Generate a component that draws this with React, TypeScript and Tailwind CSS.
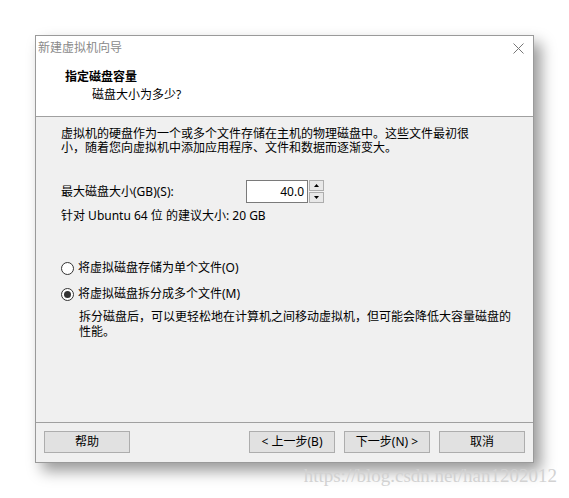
import React from "react";

const font = { fontFamily: '"Noto Sans", "Noto Sans CJK SC", sans-serif' };
const lineFont = { fontFamily: '"Liberation Sans", "Noto Sans CJK SC", sans-serif' };

function Btn({ children, className = "" }: { children: React.ReactNode; className?: string }) {
  return (
    <button
      className={`flex h-[22px] w-[86px] items-center justify-center border border-[#adadad] bg-[#e1e1e1] text-[12px] leading-none text-black ${className}`}
    >
      {children}
    </button>
  );
}

function Radio({ checked }: { checked?: boolean }) {
  return (
    <span className="flex h-[13px] w-[13px] items-center justify-center rounded-full border border-[#333] bg-white">
      {checked && <span className="h-[7px] w-[7px] rounded-full bg-[#333]" />}
    </span>
  );
}

// wrapped paragraph lines, CJK only
function Line({ children }: { children: React.ReactNode }) {
  return (
    <div className="h-[14px] whitespace-nowrap leading-[14px]" style={lineFont}>
      {children}
    </div>
  );
}

export default function App() {
  return (
    <div className="relative h-[498px] w-[569px] overflow-hidden bg-white" style={font}>
      <div className="ml-[35px] mt-[35px] flex h-[428px] w-[499px] flex-col border border-[#9a9a9a] bg-[#f0f0f0] shadow-[7px_8px_14px_rgba(0,0,0,0.4)]">
        {/* header */}
        <div className="relative h-[81px] border-b border-[#a0a0a0] bg-white">
          <div className="pl-[2px] pt-[4px] text-[12px] leading-[16px] text-[#8a8a8a]">新建虚拟机向导</div>
          <svg className="absolute right-[9px] top-[7px]" width="11" height="11" viewBox="0 0 11 11">
            <path d="M0.5 0.5 L10.5 10.5 M10.5 0.5 L0.5 10.5" stroke="#777" strokeWidth="1" />
          </svg>
          <div className="pl-[29px] pt-[13px] text-[12px] font-bold leading-[16px] text-black">指定磁盘容量</div>
          <div className="pl-[56px] pt-[2px] text-[12px] leading-[16px] text-black">磁盘大小为多少?</div>
        </div>

        {/* body */}
        <div className="flex flex-1 flex-col pl-[25px] pt-[10px] text-[12px] leading-[14px] text-black">
          <div>
            <Line>虚拟机的硬盘作为一个或多个文件存储在主机的物理磁盘中。这些文件最初很</Line>
            <Line>小，随着您向虚拟机中添加应用程序、文件和数据而逐渐变大。</Line>
          </div>

          <div className="mt-[25px] flex items-center">
            <span className="w-[185px]">最大磁盘大小(GB)(S):</span>
            <div className="flex h-[23px] items-center">
              <div className="flex h-[23px] w-[62px] items-center justify-end border border-[#7a7a7a] bg-white pr-[3px] text-[12px]">
                40.0
              </div>
              <div className="ml-[1px] flex h-[23px] w-[15px] flex-col gap-[1px]">
                <div className="flex flex-1 items-center justify-center border border-[#adadad] bg-[#e8e8e8]">
                  <svg width="5" height="3" viewBox="0 0 5 3"><path d="M2.5 0 L5 3 L0 3 Z" fill="#000" /></svg>
                </div>
                <div className="flex flex-1 items-center justify-center border border-[#adadad] bg-[#e8e8e8]">
                  <svg width="5" height="3" viewBox="0 0 5 3"><path d="M0 0 L5 0 L2.5 3 Z" fill="#000" /></svg>
                </div>
              </div>
            </div>
          </div>

          <p className="mt-[6px]">针对 Ubuntu 64 位 的建议大小: 20 GB</p>

          <div className="mt-[38px] flex items-center gap-[4px]">
            <Radio />
            <span>将虚拟磁盘存储为单个文件(O)</span>
          </div>
          <div className="mt-[12px] flex items-center gap-[4px]">
            <Radio checked />
            <span>将虚拟磁盘拆分成多个文件(M)</span>
          </div>
          <div className="mt-[9px] flex flex-col gap-[1px] pl-[18px]">
            <Line>拆分磁盘后，可以更轻松地在计算机之间移动虚拟机，但可能会降低大容量磁盘的</Line>
            <Line>性能。</Line>
          </div>
        </div>

        {/* footer */}
        <div className="flex h-[40px] items-start border-t border-[#a0a0a0] pl-[8px] pt-[8px]">
          <Btn>帮助</Btn>
          <Btn className="ml-[119px]">&lt; 上一步(B)</Btn>
          <Btn className="ml-[9px]">下一步(N) &gt;</Btn>
          <Btn className="ml-[9px]">取消</Btn>
        </div>
      </div>

      <div
        className="absolute right-[12px] top-[464px] text-[19px] leading-[24px] text-[#d2d2d2]"
        style={{ fontFamily: '"Liberation Serif", "DejaVu Serif", serif' }}
      >
        https://blog.csdn.net/han1202012
      </div>
    </div>
  );
}
